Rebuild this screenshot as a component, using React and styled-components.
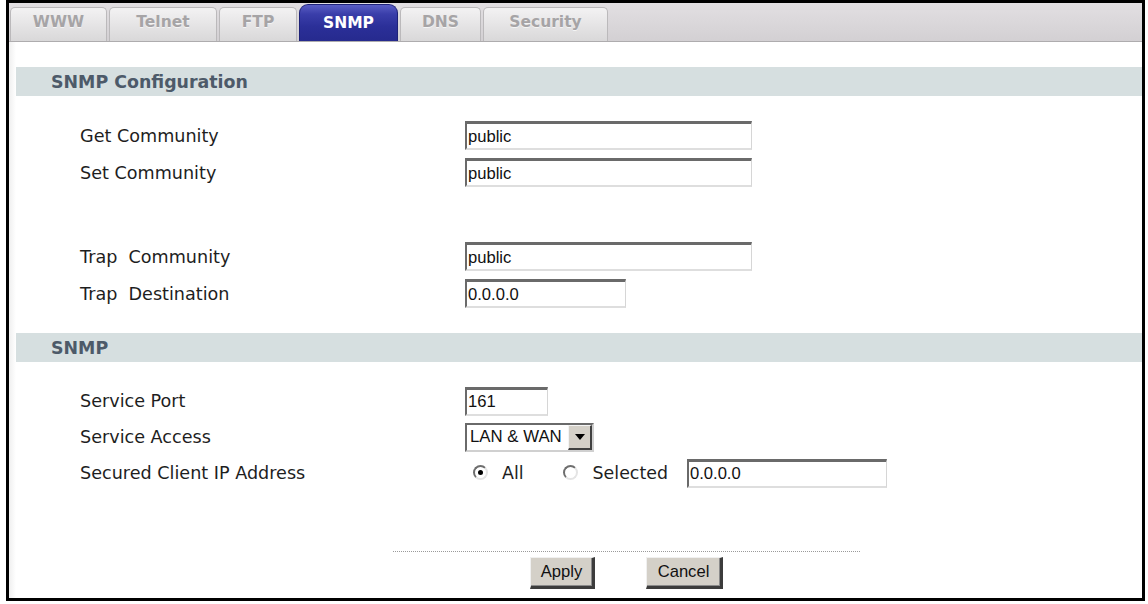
import React from "react";
import styled, { createGlobalStyle } from "styled-components";

const Global = createGlobalStyle`
  html, body { margin: 0; padding: 0; background: #fff; }
  body { width: 1148px; height: 604px; overflow: hidden; }
`;

const Frame = styled.div`
  box-sizing: border-box;
  margin-left: 6px;
  width: 1139px;
  height: 601px;
  border: 3px solid #000;
  display: flex;
  flex-direction: column;
  background: #fff;
  overflow: hidden;
`;

const TabBar = styled.div`
  box-sizing: border-box;
  height: 39px;
  flex-shrink: 0;
  display: flex;
  align-items: flex-end;
  gap: 2px;
  padding-left: 1px;
  background: linear-gradient(#e2dfe2, #d3d0d3);
  border-bottom: 1px solid #aeacae;
`;

const Tab = styled.div`
  box-sizing: border-box;
  width: ${(p) => p.$w}px;
  height: ${(p) => (p.$active ? 37 : 34)}px;
  display: flex;
  align-items: center;
  justify-content: center;
  padding-bottom: ${(p) => (p.$active ? 1 : 5)}px;
  font-family: "DejaVu Sans", Verdana, sans-serif;
  font-weight: bold;
  font-size: 15.5px;
  color: ${(p) => (p.$active ? "#ffffff" : "#a6a4a6")};
  border: 1px solid ${(p) => (p.$active ? "#1e2278" : "#bbb9bb")};
  border-bottom: none;
  border-radius: ${(p) => (p.$active ? "9px 9px 0 0" : "5px 5px 0 0")};
  background: ${(p) =>
    p.$active
      ? "linear-gradient(#5a5ec4 0%, #3a3eaa 25%, #2b2f98 60%, #262a8e 100%)"
      : "linear-gradient(#f3f2f3, #e3e2e3 60%, #d9d8d9)"};
  text-shadow: ${(p) => (p.$active ? "none" : "0 1px 0 #f4f4f4")};
`;

const Content = styled.div`
  flex: 1;
  padding-left: 7px;
  padding-top: 25px;
  background: linear-gradient(to right, #efefef, #fff) 0 0 / 7px 100% no-repeat;
  display: flex;
  flex-direction: column;
`;

const Band = styled.div`
  height: 29px;
  flex-shrink: 0;
  display: flex;
  align-items: center;
  padding-left: 35px;
  background: #d6dfe0;
  font-family: "DejaVu Sans", Verdana, sans-serif;
  font-weight: bold;
  font-size: 17.4px;
  color: #4d5a69;
`;

const Section = styled.div`
  padding: 21px 0;
  display: flex;
  flex-direction: column;
`;

const Row = styled.div`
  display: grid;
  grid-template-columns: 385px 1fr;
  align-items: center;
  height: ${(p) => p.$h || 37}px;
  padding-left: 64px;
`;

const Spacer = styled.div`
  height: ${(p) => p.$h}px;
`;

const Label = styled.span`
  font-family: "DejaVu Sans", Verdana, sans-serif;
  font-size: 17.6px;
  color: #1e1e1e;
  white-space: pre;
`;

const Controls = styled.div`
  display: flex;
  align-items: center;
`;

const TextBox = styled.div`
  box-sizing: border-box;
  width: ${(p) => p.$w}px;
  height: 29px;
  display: flex;
  align-items: center;
  padding-left: 1px;
  padding-top: 1px;
  background: #fff;
  border-style: solid;
  border-width: 3px 1px 2px 2px;
  border-color: #6a6a6a #d6d6d6 #dedede #6a6a6a;
  font-family: "Liberation Sans", Arial, sans-serif;
  font-size: 16.6px;
  color: #111;
  margin-left: ${(p) => p.$ml || 0}px;
`;

const SelectBox = styled.div`
  box-sizing: border-box;
  width: 129px;
  height: 29px;
  display: flex;
  align-items: center;
  justify-content: space-between;
  background: #fff;
  border-style: solid;
  border-width: 2px;
  border-color: #6a6a6a #d0d0d0 #d0d0d0 #6a6a6a;
  padding-left: 3px;
  font-family: "Liberation Sans", Arial, sans-serif;
  font-size: 16.8px;
  color: #111;
`;

const ArrowButton = styled.div`
  box-sizing: border-box;
  width: 24px;
  height: 100%;
  display: flex;
  align-items: center;
  justify-content: center;
  background: #d4d0c8;
  border-style: solid;
  border-width: 1px 2px 2px 1px;
  border-color: #f4f4f4 #404040 #404040 #f4f4f4;
`;

const Radio = styled.span`
  box-sizing: border-box;
  width: 15px;
  height: 15px;
  border-radius: 50%;
  border: 2px solid;
  border-color: #6e6e6e #e4e4e4 #e4e4e4 #6e6e6e;
  background: #fff;
  display: inline-flex;
  align-items: center;
  justify-content: center;
  margin-left: ${(p) => p.$ml}px;
  margin-top: -2px;
  &::after {
    content: "";
    width: 5px;
    height: 5px;
    border-radius: 50%;
    background: ${(p) => (p.$checked ? "#000" : "transparent")};
  }
`;

const RadioText = styled.span`
  font-family: "DejaVu Sans", Verdana, sans-serif;
  font-size: 17.4px;
  color: #1e1e1e;
  margin-left: ${(p) => p.$ml}px;
`;

const Footer = styled.div`
  margin-top: 39px;
  margin-left: 377px;
  width: 467px;
  display: flex;
  flex-direction: column;
`;

const Dotted = styled.div`
  border-top: 1px dotted #9a9a9a;
`;

const Buttons = styled.div`
  display: flex;
  justify-content: center;
  gap: 51px;
  margin-top: 5px;
`;

const Button = styled.div`
  box-sizing: border-box;
  width: ${(p) => p.$w}px;
  height: 32px;
  display: flex;
  align-items: center;
  justify-content: center;
  background: #d4d0c8;
  border-style: solid;
  border-width: 1px 3px 3px 1px;
  border-color: #f0f0f0 #3c3c3c #3c3c3c #f0f0f0;
  box-shadow: inset -1px -1px 0 #8a8a8a;
  font-family: "Liberation Sans", Arial, sans-serif;
  font-size: 16.6px;
  color: #111;
`;

const tabs = [
  { name: "WWW", w: 97 },
  { name: "Telnet", w: 108 },
  { name: "FTP", w: 78 },
  { name: "SNMP", w: 99, active: true },
  { name: "DNS", w: 81 },
  { name: "Security", w: 125 },
];

export default function App() {
  return (
    <>
      <Global />
      <Frame>
        <TabBar>
          {tabs.map((t) => (
            <Tab key={t.name} $w={t.w} $active={t.active}>
              {t.name}
            </Tab>
          ))}
        </TabBar>
        <Content>
          <Band>SNMP Configuration</Band>
          <Section>
            <Row>
              <Label>Get Community</Label>
              <Controls>
                <TextBox $w={287}>public</TextBox>
              </Controls>
            </Row>
            <Row>
              <Label>Set Community</Label>
              <Controls>
                <TextBox $w={287}>public</TextBox>
              </Controls>
            </Row>
            <Spacer $h={47} />
            <Row>
              <Label>{"Trap  Community"}</Label>
              <Controls>
                <TextBox $w={287}>public</TextBox>
              </Controls>
            </Row>
            <Row>
              <Label>{"Trap  Destination"}</Label>
              <Controls>
                <TextBox $w={161}>0.0.0.0</TextBox>
              </Controls>
            </Row>
          </Section>
          <Band>SNMP</Band>
          <Section>
            <Row $h={36}>
              <Label>Service Port</Label>
              <Controls>
                <TextBox $w={83}>161</TextBox>
              </Controls>
            </Row>
            <Row $h={36}>
              <Label>Service Access</Label>
              <Controls>
                <SelectBox>
                  <span>LAN &amp; WAN</span>
                  <ArrowButton>
                    <svg width="10" height="6" viewBox="0 0 10 6">
                      <path d="M0 0 H10 L5 6 Z" fill="#000" />
                    </svg>
                  </ArrowButton>
                </SelectBox>
              </Controls>
            </Row>
            <Row $h={36}>
              <Label>Secured Client IP Address</Label>
              <Controls>
                <Radio $checked $ml={8} />
                <RadioText $ml={14}>All</RadioText>
                <Radio $ml={39} />
                <RadioText $ml={15}>Selected</RadioText>
                <TextBox $w={200} $ml={19}>0.0.0.0</TextBox>
              </Controls>
            </Row>
          </Section>
          <Footer>
            <Dotted />
            <Buttons>
              <Button $w={65}>Apply</Button>
              <Button $w={77}>Cancel</Button>
            </Buttons>
          </Footer>
        </Content>
      </Frame>
    </>
  );
}
